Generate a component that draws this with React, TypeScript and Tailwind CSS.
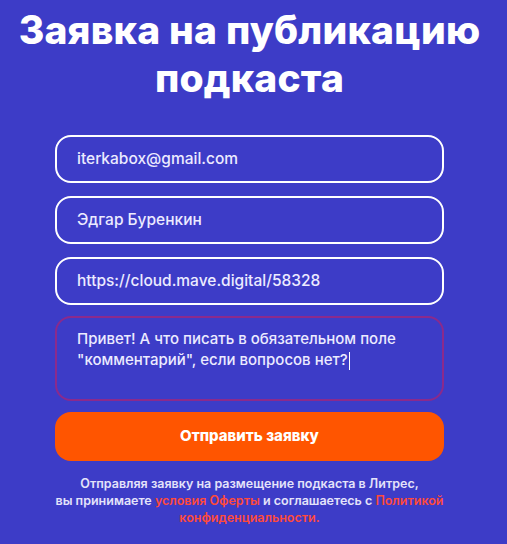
const font = { fontFamily: "Inter, 'Noto Sans', sans-serif" };

const fields = [
  "iterkabox@gmail.com",
  "Эдгар Буренкин",
  "https://cloud.mave.digital/58328",
];

export default function App() {
  return (
    <div
      className="min-h-[544px] w-full bg-[#3d3cc7] flex flex-col items-center pt-[6px] pr-[8px]"
      style={font}
    >
      <h1 className="text-center text-white font-extrabold text-[39px] leading-[48px] tracking-[0.2px]">
        Заявка на публикацию
        <br />
        подкаста
      </h1>

      <form className="mt-[33px] w-[389px] flex flex-col gap-[13px]">
        {fields.map((value) => (
          <div
            key={value}
            className="h-[48px] rounded-[16px] border-2 border-white flex items-center px-[20px] text-[15.5px] font-medium text-[#ecebff]"
          >
            {value}
          </div>
        ))}

        <div className="mt-[-2px] h-[85px] rounded-[16px] border-2 border-[#8b2a8c] px-[20px] pt-[10px] text-[15px] font-medium leading-[21px] text-[#ecebff]">
          Привет! А что писать в обязательном поле
          <br />
          "комментарий", если вопросов нет?
          <span className="inline-block w-px h-[18px] bg-white align-middle ml-[1px]" />
        </div>

        <button
          type="button"
          className="mt-[-2px] h-[49px] rounded-[16px] bg-[#ff5500] text-white font-extrabold text-[15px]"
        >
          Отправить заявку
        </button>
      </form>

      <p className="mt-[14px] w-[420px] text-center text-[12.5px] font-semibold leading-[17px] text-[#e4e3fa]">
        Отправляя заявку на размещение подкаста в Литрес,
        <br />
        вы принимаете <span className="text-[#ff4a3a]">условия Оферты</span> и соглашаетесь с{" "}
        <span className="text-[#ff4a3a]">Политикой</span>
        <br />
        <span className="text-[#ff4a3a]">конфиденциальности.</span>
      </p>
    </div>
  );
}
